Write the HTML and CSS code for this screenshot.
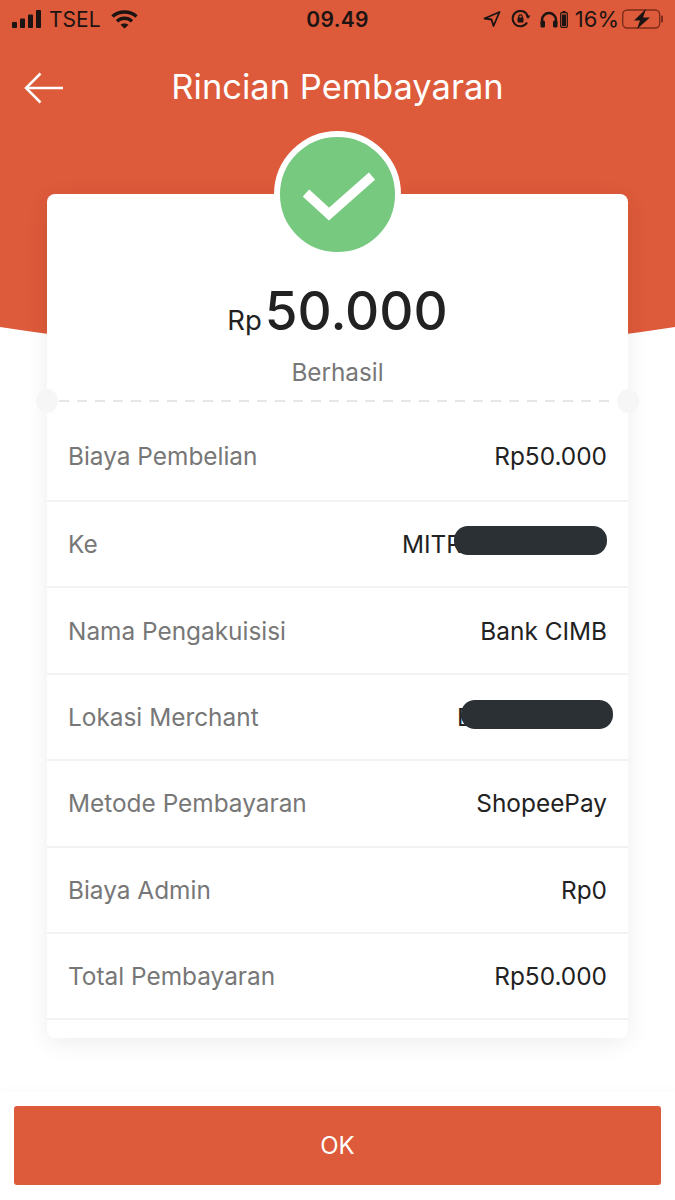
FILE: index.html
```html
<!DOCTYPE html>
<html lang="en">
<head>
    <meta charset="UTF-8">
    <meta name="viewport" content="width=device-width, initial-scale=1.0">
    <title>Rincian Pembayaran</title>
    <link rel="stylesheet" href="styles.css">
</head>
<body>
<div class="screen">
    <!-- orange backdrop behind the header and card -->
    <svg class="backdrop" width="675" height="345" viewBox="0 0 675 345">
        <path d="M0 0H675V327Q338 380 0 327Z" fill="#dd5a3a"/>
    </svg>

    <div class="status-bar">
        <div class="status-left">
            <svg width="30" height="18" viewBox="0 0 30 18" fill="#1c1412">
                <rect x="0" y="12" width="5" height="6" rx="1"/>
                <rect x="8" y="8.500" width="5" height="9.500" rx="1"/>
                <rect x="16" y="4.500" width="5" height="13.500" rx="1"/>
                <rect x="24" y="0" width="5" height="18" rx="1"/>
            </svg>
            <span class="carrier">TSEL</span>
            <svg class="wifi" width="27" height="19" viewBox="0 0 27 19" fill="none" stroke="#1c1412" stroke-width="3.500">
                <path d="M1.500 6.500C8 .5 19 .5 25.500 6.500"/>
                <path d="M6 11.200C10.500 7.300 16.500 7.300 21 11.200"/>
                <path d="M13.500 18.500L9.500 14.800C11.800 13 15.200 13 17.500 14.800Z" fill="#1c1412" stroke="none"/>
            </svg>
        </div>
        <div class="status-time">09.49</div>
        <div class="status-right">
            <svg width="18" height="16" viewBox="0 0 18 16" fill="none" stroke="#1c1412" stroke-width="1.800" stroke-linejoin="round">
                <path d="M16.500 1L1.500 7.500L8.500 8.500L10.500 15Z"/>
            </svg>
            <svg class="lock-icon" width="20" height="18" viewBox="0 0 20 18" fill="none" stroke="#1c1412" stroke-width="2">
                <path d="M16 12.500A7.700 7.700 0 1 1 16.600 6"/>
                <path d="M14.500 5.500H19.500L17 9Z" fill="#1c1412" stroke="none"/>
                <rect x="6.500" y="7.500" width="6" height="5" rx="1" fill="#1c1412" stroke="none"/>
                <path d="M7.800 8V6.500A1.700 1.700 0 0 1 11.200 6.500V8" stroke-width="1.200"/>
            </svg>
            <svg class="phones" width="18" height="17" viewBox="0 0 18 17" fill="none" stroke="#1c1412" stroke-width="2.400">
                <path d="M2 13V9A7 7 0 0 1 16 9V13"/>
                <rect x="0.500" y="9.500" width="4.500" height="7" rx="1.500" fill="#1c1412" stroke="none"/>
                <rect x="13" y="9.500" width="4.500" height="7" rx="1.500" fill="#1c1412" stroke="none"/>
            </svg>
            <svg class="phones-battery" width="8" height="17" viewBox="0 0 8 17">
                <rect x="2.500" y="0" width="3" height="2" fill="#1c1412"/>
                <rect x=".700" y="1.700" width="6.600" height="14.600" rx="1" fill="none" stroke="#1c1412" stroke-width="1.200"/>
                <rect x="2" y="3.500" width="4" height="11.500" fill="#1c1412"/>
            </svg>
            <span class="battery-pct">16%</span>
            <svg class="battery" width="41" height="20" viewBox="0 0 41 20">
                <rect x=".700" y="1" width="37" height="18" rx="4.500" fill="none" stroke="#7c2c1a" stroke-width="1.400"/>
                <rect x="39" y="6.500" width="2" height="7" rx="1" fill="#7c2c1a"/>
                <path d="M24 0L12 11.500H18L15 20L28 8.500H21Z" fill="#1c1412"/>
            </svg>
        </div>
    </div>

    <div class="nav-bar">
        <svg class="back" width="40" height="32" viewBox="0 0 40 32" fill="none" stroke="#fff" stroke-width="2.500">
            <path d="M16.500 1.500L2 16L16.500 30.500"/>
            <path d="M2 16H39"/>
        </svg>
        <h1 class="nav-title">Rincian Pembayaran</h1>
    </div>

    <div class="receipt">
        <div class="check-badge">
            <svg width="72" height="50" viewBox="0 0 72 50" fill="none" stroke="#fff" stroke-width="9.500">
                <path d="M3 21L26 42L69 4"/>
            </svg>
        </div>

        <div class="summary">
            <div class="amount"><span class="amount-cur">Rp</span><span class="amount-num">50.000</span></div>
            <div class="amount-status">Berhasil</div>
        </div>

        <div class="tear">
            <span class="notch notch-left"></span>
            <span class="notch notch-right"></span>
        </div>

        <div class="row row-first">
            <span class="label">Biaya Pembelian</span>
            <span class="value">Rp50.000</span>
        </div>
        <div class="row">
            <span class="label">Ke</span>
            <span class="value">MITR<span class="blob"></span></span>
        </div>
        <div class="row">
            <span class="label">Nama Pengakuisisi</span>
            <span class="value">Bank CIMB</span>
        </div>
        <div class="row">
            <span class="label">Lokasi Merchant</span>
            <span class="value value-loc">B<span class="blob blob-loc"></span></span>
        </div>
        <div class="row">
            <span class="label">Metode Pembayaran</span>
            <span class="value">ShopeePay</span>
        </div>
        <div class="row">
            <span class="label">Biaya Admin</span>
            <span class="value">Rp0</span>
        </div>
        <div class="row">
            <span class="label">Total Pembayaran</span>
            <span class="value">Rp50.000</span>
        </div>
        <div class="row-empty"></div>
    </div>

    <div class="footer">
        <button class="ok-btn">OK</button>
    </div>
</div>
</body>
</html>
```

FILE: styles.css
```css
html, body {
    margin: 0;
    padding: 0;
    background-color: #fff;
}
body {
    font-family: Inter, "Liberation Sans", sans-serif;
    color: #222;
}
.screen {
    position: relative;
    width: 675px;
    height: 1200px;
    overflow: hidden;
    display: flex;
    flex-direction: column;
}
.backdrop {
    position: absolute;
    left: 0;
    top: 0;
}

/* status bar */
.status-bar {
    position: relative;
    height: 38px;
    padding: 0 12px;
    display: grid;
    grid-template-columns: 1fr auto 1fr;
    align-items: center;
    color: #1c1412;
    font-size: 21px;
}
.status-left, .status-right {
    display: flex;
    align-items: center;
}
.status-right {
    justify-content: flex-end;
}
.carrier {
    margin-left: 7px;
}
.wifi {
    margin-left: 10px;
}
.status-time {
    font-weight: 600;
    letter-spacing: .3px;
}
.lock-icon {
    margin-left: 10px;
}
.phones {
    margin-left: 9px;
}
.phones-battery {
    margin-left: 2px;
}
.battery-pct {
    margin-left: 7px;
    font-size: 22px;
}
.battery {
    margin-left: 3px;
}

/* nav */
.nav-bar {
    position: relative;
    height: 96px;
    display: flex;
    align-items: center;
    justify-content: center;
    margin-top: 1px;
}
.back {
    position: absolute;
    left: 24px;
    top: 33px;
}
.nav-title {
    margin: 0 0 2px;
    font-size: 34.500px;
    font-weight: 400;
    color: #fff;
}

/* receipt card */
.receipt {
    position: relative;
    width: 581px;
    height: 844px;
    margin: 59px 0 0 47px;
    background: #fff;
    border-radius: 8px;
    box-shadow: 0 5px 24px rgba(0, 0, 0, .07);
    display: flex;
    flex-direction: column;
}
.check-badge {
    position: absolute;
    left: 227px;
    top: -63px;
    width: 115px;
    height: 115px;
    border: 6px solid #fff;
    border-radius: 50%;
    background-color: #77c97f;
    display: flex;
    align-items: center;
    justify-content: center;
}
.check-badge svg {
    margin: 4px 0 0 2px;
}
.summary {
    height: 206px;
    box-sizing: border-box;
    padding-top: 84px;
    text-align: center;
}
.amount {
    display: flex;
    align-items: baseline;
    justify-content: center;
    height: 66px;
}
.amount-cur {
    font-size: 27.500px;
    margin-right: 3px;
}
.amount-num {
    font-size: 53px;
    font-weight: 500;
    line-height: 66px;
}
.amount-status {
    margin-top: 13px;
    font-size: 24.300px;
    line-height: 30px;
    color: #777;
}
.tear {
    position: relative;
    height: 2px;
    margin: 0 12px;
    background: repeating-linear-gradient(90deg, #e6e6e6 0, #e6e6e6 10px, transparent 10px, transparent 18px);
}
.notch {
    position: absolute;
    top: -11px;
    width: 22px;
    height: 24px;
    border-radius: 50%;
    background-color: #f6f6f6;
}
.notch-left {
    left: -23px;
}
.notch-right {
    right: -23px;
}
.row {
    height: 86.400px;
    box-sizing: border-box;
    padding: 0 21px;
    display: flex;
    align-items: center;
    justify-content: space-between;
    border-bottom: 2px solid #f2f2f2;
    font-size: 24.400px;
}
.row-first {
    height: 100px;
    padding-top: 10px;
}
.label {
    color: #777;
}
.value {
    color: #222;
    display: flex;
    align-items: center;
}
.blob {
    width: 153px;
    height: 29px;
    margin-left: -8px;
    margin-bottom: 8px;
    border-radius: 14px;
    background-color: #2b3035;
}
.value-loc {
    margin-right: -6px;
}
.blob-loc {
    width: 152px;
    margin-left: -12px;
    margin-bottom: 4px;
}
.row-empty {
    flex: 1;
}

/* bottom bar */
.footer {
    position: absolute;
    left: 0;
    bottom: 0;
    width: 100%;
    height: 108px;
    box-sizing: border-box;
    padding: 14px 14px 15px;
    background: #fff;
    box-shadow: 0 -3px 10px rgba(0, 0, 0, .02);
    display: flex;
}
.ok-btn {
    flex: 1;
    border: 0;
    border-radius: 3px;
    background-color: #dd5a3a;
    color: #fff;
    font-family: inherit;
    font-size: 24px;
}
```
